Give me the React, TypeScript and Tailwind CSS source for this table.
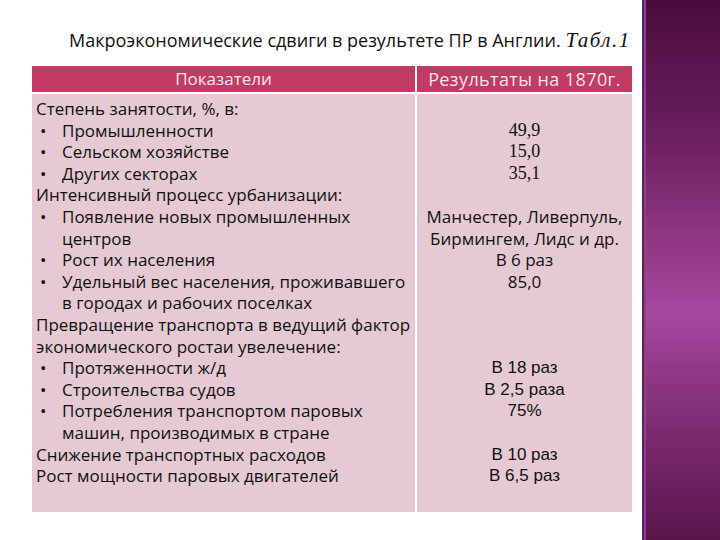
const rows: { left: string; bullet?: boolean; indent?: boolean; right?: string; serif?: boolean; arial?: boolean }[] = [
  { left: "Степень занятости, %, в:" },
  { left: "Промышленности", bullet: true, right: "49,9", serif: true },
  { left: "Сельском хозяйстве", bullet: true, right: "15,0", serif: true },
  { left: "Других секторах", bullet: true, right: "35,1", serif: true },
  { left: "Интенсивный процесс урбанизации:" },
  { left: "Появление новых промышленных", bullet: true, right: "Манчестер, Ливерпуль," },
  { left: "центров", indent: true, right: "Бирмингем, Лидс и др." },
  { left: "Рост их населения", bullet: true, right: "В 6 раз" },
  { left: "Удельный вес населения, проживавшего", bullet: true, right: "85,0" },
  { left: "в городах и рабочих поселках", indent: true },
  { left: "Превращение транспорта в ведущий фактор" },
  { left: "экономического ростаи увелечение:" },
  { left: "Протяженности ж/д", bullet: true, right: "В 18 раз", arial: true },
  { left: "Строительства судов", bullet: true, right: "В 2,5 раза", arial: true },
  { left: "Потребления транспортом паровых", bullet: true, right: "75%", arial: true },
  { left: "машин, производимых в стране", indent: true },
  { left: "Снижение транспортных расходов", right: "В 10 раз", arial: true },
  { left: "Рост мощности паровых двигателей", right: "В 6,5 раз", arial: true },
];

export default function App() {
  return (
    <div className="w-[720px] h-[540px] bg-white flex overflow-hidden font-['Open_Sans',sans-serif] text-[#111]">
      <div className="w-[642px] flex flex-col">
        <div className="pt-[28px] pl-[69px] h-[66px] text-[18px] leading-[24px] whitespace-nowrap">
          Макроэкономические сдвиги в результете ПР в Англии.{" "}
          <span className="italic font-['Liberation_Serif',serif] text-[21px] tracking-[1.5px]">Табл.1</span>
        </div>
        <div className="ml-[32px] w-[600px] h-[446px] flex gap-[2px]">
          <div className="w-[383px] flex flex-col gap-[2px]">
            <div className="h-[26px] bg-[#c13b63] text-[#f6e4ea] text-[17px] leading-[26px] text-center">
              Показатели
            </div>
            <div className="flex-1 bg-[#e5cad3] pt-[4px] pl-[4px] text-[17px] leading-[21.6px]">
              {rows.map((r, i) => (
                <div key={i} className="flex whitespace-nowrap h-[21.6px]">
                  {r.bullet ? (
                    <span className="w-[26px] pl-[4px]">•</span>
                  ) : r.indent ? (
                    <span className="w-[26px]" />
                  ) : null}
                  <span>{r.left}</span>
                </div>
              ))}
            </div>
          </div>
          <div className="w-[215px] flex flex-col gap-[2px]">
            <div className="h-[26px] bg-[#c13b63] text-[#f6e4ea] text-[18px] tracking-[0.4px] leading-[26px] text-center whitespace-nowrap">
              Результаты на 1870г.
            </div>
            <div className="flex-1 bg-[#e5cad3] pt-[4px] text-[17px] leading-[21.6px] text-center">
              {rows.map((r, i) => (
                <div
                  key={i}
                  className={
                    "h-[21.6px] whitespace-nowrap " +
                    (r.serif
                      ? "font-['Liberation_Serif',serif] text-[18px]"
                      : r.arial
                        ? "font-['Liberation_Sans',sans-serif] text-[17px]"
                        : "")
                  }
                >
                  {r.right ?? ""}
                </div>
              ))}
            </div>
          </div>
        </div>
      </div>
      <div className="flex-1 flex">
        <div className="w-[2px] bg-[#4a2a66]" />
        <div className="w-[2px] bg-[#8e3f86]" />
        <div className="flex-1 bg-[linear-gradient(to_bottom,#4a0c3e_0%,#6a1f5e_25%,#9a3e8e_50%,#a548a0_58%,#8a3480_72%,#5a154c_100%)]" />
      </div>
    </div>
  );
}
